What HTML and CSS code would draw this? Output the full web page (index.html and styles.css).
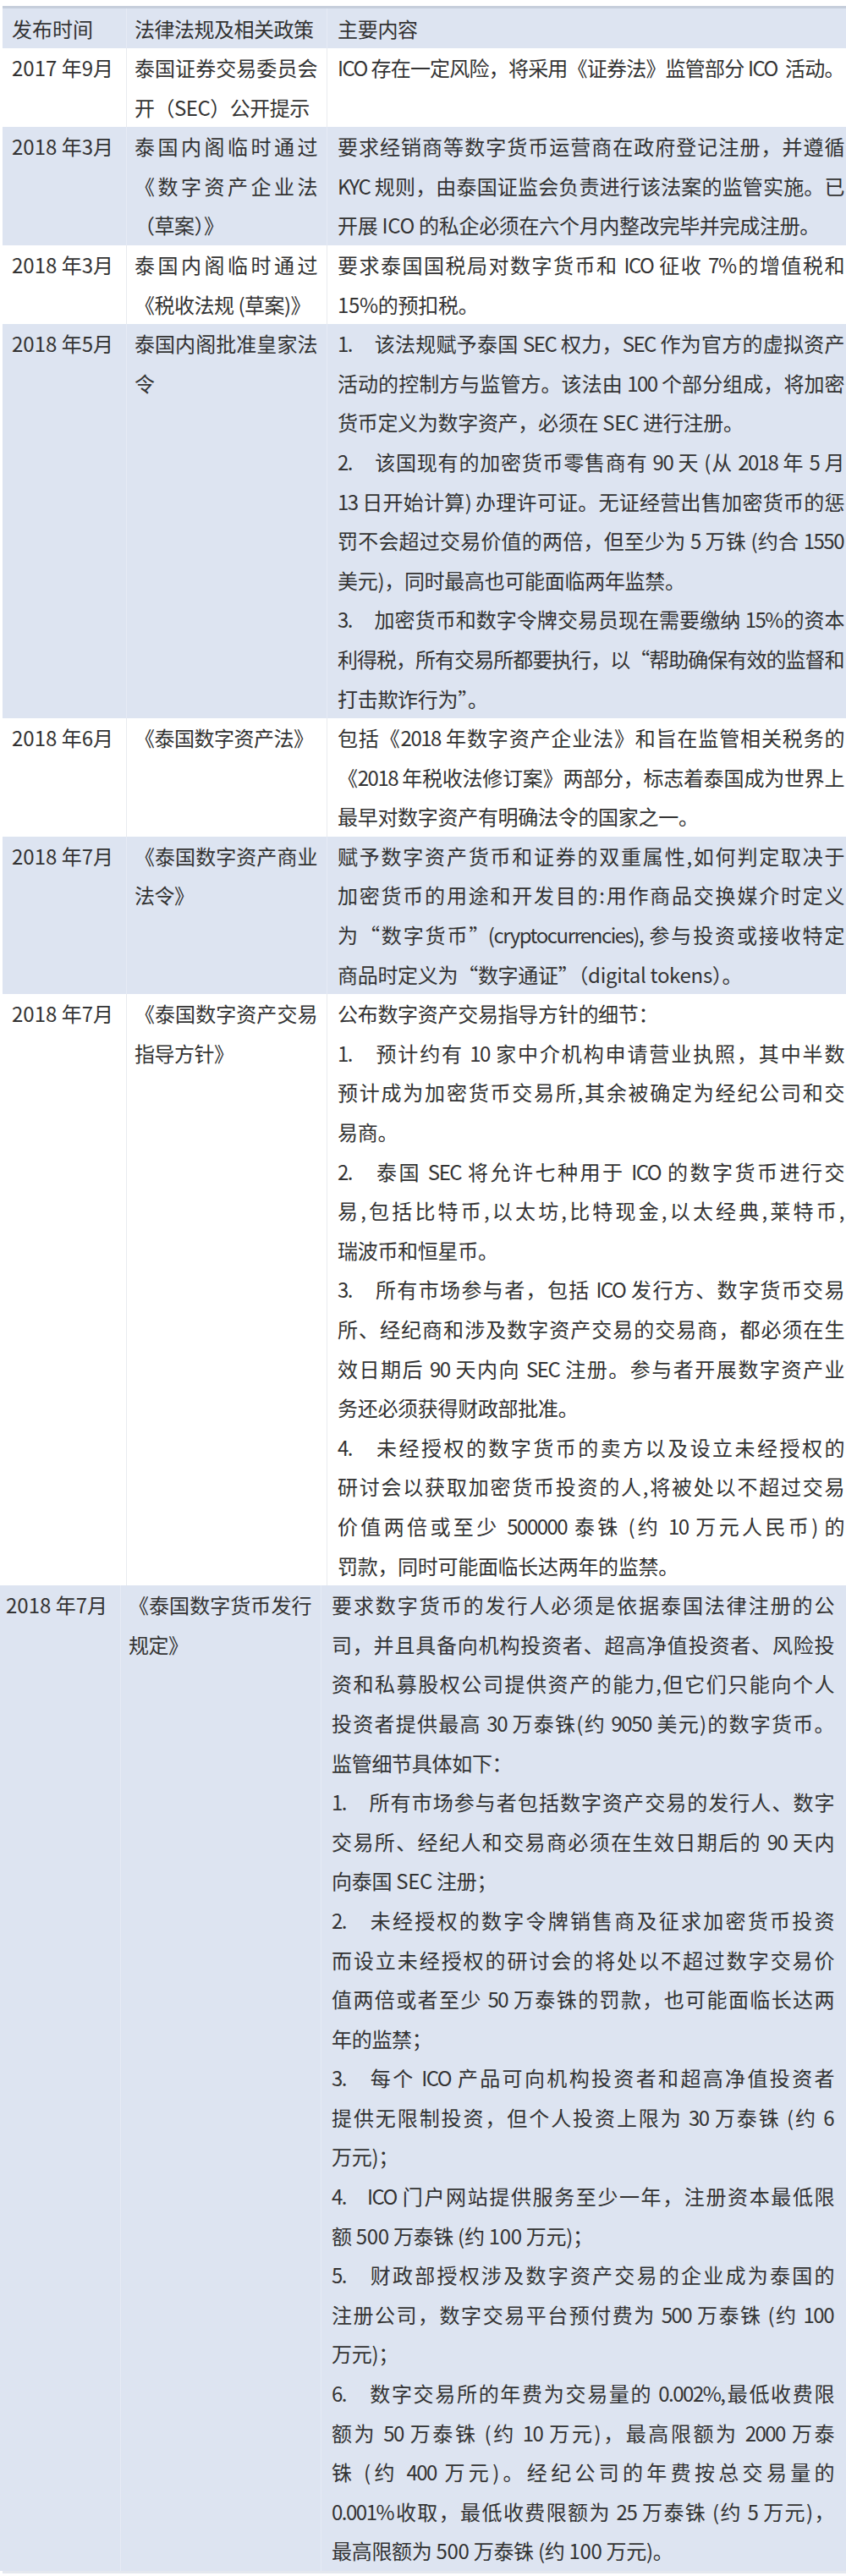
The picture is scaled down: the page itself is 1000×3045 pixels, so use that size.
FILE: index.html
```html
<!DOCTYPE html>
<html lang="zh-CN">
<head>
<meta charset="utf-8">
<title>泰国数字资产法规</title>
<link rel="stylesheet" href="styles.css">
</head>
<body>
<div class="tbl">
  <div class="row row--blue row--head">
    <div class="cell c1"><span class="line end">发布时间</span></div>
    <div class="cell c2"><span class="line end">法律法规及相关政策</span></div>
    <div class="cell c3"><span class="line end">主要内容</span></div>
  </div>

  <div class="row">
    <div class="cell c1"><span class="line end">2017 年9月</span></div>
    <div class="cell c2">
      <span class="line">泰国证券交易委员会</span>
      <span class="line end">开（SEC）公开提示</span>
    </div>
    <div class="cell c3">
      <span class="line">ICO 存在一定风险，将采用《证券法》监管部分 ICO&nbsp; 活动。</span>
    </div>
  </div>

  <div class="row row--blue">
    <div class="cell c1"><span class="line end">2018 年3月</span></div>
    <div class="cell c2">
      <span class="line">泰国内阁临时通过</span>
      <span class="line">《数字资产企业法</span>
      <span class="line end">（草案）》</span>
    </div>
    <div class="cell c3">
      <span class="line">要求经销商等数字货币运营商在政府登记注册，并遵循</span>
      <span class="line">KYC 规则，由泰国证监会负责进行该法案的监管实施。已</span>
      <span class="line end">开展 ICO 的私企必须在六个月内整改完毕并完成注册。</span>
    </div>
  </div>

  <div class="row">
    <div class="cell c1"><span class="line end">2018 年3月</span></div>
    <div class="cell c2">
      <span class="line">泰国内阁临时通过</span>
      <span class="line end">《税收法规 (草案)》</span>
    </div>
    <div class="cell c3">
      <span class="line">要求泰国国税局对数字货币和 ICO 征收 7%的增值税和</span>
      <span class="line end">15%的预扣税。</span>
    </div>
  </div>

  <div class="row row--blue">
    <div class="cell c1"><span class="line end">2018 年5月</span></div>
    <div class="cell c2">
      <span class="line">泰国内阁批准皇家法</span>
      <span class="line end">令</span>
    </div>
    <div class="cell c3">
      <span class="line"><span class="num">1.</span>该法规赋予泰国 SEC 权力，SEC 作为官方的虚拟资产</span>
      <span class="line">活动的控制方与监管方。该法由 100 个部分组成，将加密</span>
      <span class="line end">货币定义为数字资产，必须在 SEC 进行注册。</span>
      <span class="line"><span class="num">2.</span>该国现有的加密货币零售商有 90 天 (从 2018 年 5 月</span>
      <span class="line">13 日开始计算) 办理许可证。无证经营出售加密货币的惩</span>
      <span class="line">罚不会超过交易价值的两倍，但至少为 5 万铢 (约合 1550</span>
      <span class="line end">美元)，同时最高也可能面临两年监禁。</span>
      <span class="line"><span class="num">3.</span>加密货币和数字令牌交易员现在需要缴纳 15%的资本</span>
      <span class="line">利得税，所有交易所都要执行，以“帮助确保有效的监督和</span>
      <span class="line end">打击欺诈行为”。</span>
    </div>
  </div>

  <div class="row">
    <div class="cell c1"><span class="line end">2018 年6月</span></div>
    <div class="cell c2">
      <span class="line end">《泰国数字资产法》</span>
    </div>
    <div class="cell c3">
      <span class="line">包括《2018 年数字资产企业法》和旨在监管相关税务的</span>
      <span class="line">《2018 年税收法修订案》两部分，标志着泰国成为世界上</span>
      <span class="line end">最早对数字资产有明确法令的国家之一。</span>
    </div>
  </div>

  <div class="row row--blue">
    <div class="cell c1"><span class="line end">2018 年7月</span></div>
    <div class="cell c2">
      <span class="line">《泰国数字资产商业</span>
      <span class="line end">法令》</span>
    </div>
    <div class="cell c3">
      <span class="line">赋予数字资产货币和证券的双重属性,如何判定取决于</span>
      <span class="line">加密货币的用途和开发目的:用作商品交换媒介时定义</span>
      <span class="line">为“数字货币”(cryptocurrencies), 参与投资或接收特定</span>
      <span class="line end">商品时定义为“数字通证”（digital tokens）。</span>
    </div>
  </div>

  <div class="row">
    <div class="cell c1"><span class="line end">2018 年7月</span></div>
    <div class="cell c2">
      <span class="line">《泰国数字资产交易</span>
      <span class="line end">指导方针》</span>
    </div>
    <div class="cell c3">
      <span class="line end">公布数字资产交易指导方针的细节：</span>
      <span class="line"><span class="num">1.</span>预计约有 10 家中介机构申请营业执照，其中半数</span>
      <span class="line">预计成为加密货币交易所,其余被确定为经纪公司和交</span>
      <span class="line end">易商。</span>
      <span class="line"><span class="num">2.</span>泰国 SEC 将允许七种用于 ICO 的数字货币进行交</span>
      <span class="line">易,包括比特币,以太坊,比特现金,以太经典,莱特币,</span>
      <span class="line end">瑞波币和恒星币。</span>
      <span class="line"><span class="num">3.</span>所有市场参与者，包括 ICO 发行方、数字货币交易</span>
      <span class="line">所、经纪商和涉及数字资产交易的交易商，都必须在生</span>
      <span class="line">效日期后 90 天内向 SEC 注册。参与者开展数字资产业</span>
      <span class="line end">务还必须获得财政部批准。</span>
      <span class="line"><span class="num">4.</span>未经授权的数字货币的卖方以及设立未经授权的</span>
      <span class="line">研讨会以获取加密货币投资的人,将被处以不超过交易</span>
      <span class="line">价值两倍或至少 500000 泰铢 (约 10 万元人民币) 的</span>
      <span class="line end">罚款，同时可能面临长达两年的监禁。</span>
    </div>
  </div>

  <div class="row row--blue row--shift">
    <div class="cell c1"><span class="line end">2018 年7月</span></div>
    <div class="cell c2">
      <span class="line">《泰国数字货币发行</span>
      <span class="line end">规定》</span>
    </div>
    <div class="cell c3">
      <span class="line">要求数字货币的发行人必须是依据泰国法律注册的公</span>
      <span class="line">司，并且具备向机构投资者、超高净值投资者、风险投</span>
      <span class="line">资和私募股权公司提供资产的能力,但它们只能向个人</span>
      <span class="line">投资者提供最高 30 万泰铢(约 9050 美元)的数字货币。</span>
      <span class="line end">监管细节具体如下：</span>
      <span class="line"><span class="num">1.</span>所有市场参与者包括数字资产交易的发行人、数字</span>
      <span class="line">交易所、经纪人和交易商必须在生效日期后的 90 天内</span>
      <span class="line end">向泰国 SEC 注册；</span>
      <span class="line"><span class="num">2.</span>未经授权的数字令牌销售商及征求加密货币投资</span>
      <span class="line">而设立未经授权的研讨会的将处以不超过数字交易价</span>
      <span class="line">值两倍或者至少 50 万泰铢的罚款，也可能面临长达两</span>
      <span class="line end">年的监禁；</span>
      <span class="line"><span class="num">3.</span>每个 ICO 产品可向机构投资者和超高净值投资者</span>
      <span class="line">提供无限制投资，但个人投资上限为 30 万泰铢 (约 6</span>
      <span class="line end">万元)；</span>
      <span class="line"><span class="num">4.</span>ICO 门户网站提供服务至少一年，注册资本最低限</span>
      <span class="line end">额 500 万泰铢 (约 100 万元)；</span>
      <span class="line"><span class="num">5.</span>财政部授权涉及数字资产交易的企业成为泰国的</span>
      <span class="line">注册公司，数字交易平台预付费为 500 万泰铢 (约 100</span>
      <span class="line end">万元)；</span>
      <span class="line"><span class="num">6.</span>数字交易所的年费为交易量的 0.002%,最低收费限</span>
      <span class="line">额为 50 万泰铢 (约 10 万元)，最高限额为 2000 万泰</span>
      <span class="line">铢 (约 400 万元)。经纪公司的年费按总交易量的</span>
      <span class="line">0.001%收取，最低收费限额为 25 万泰铢 (约 5 万元)，</span>
      <span class="line end">最高限额为 500 万泰铢 (约 100 万元)。</span>
    </div>
  </div>
</div>
</body>
</html>
```

FILE: styles.css
```css
html, body {
  margin: 0;
  padding: 0;
  background: #ffffff;
}

body {
  width: 1000px;
  overflow: hidden;
  font-family: "Noto Sans CJK SC", "Noto Sans", sans-serif;
  font-size: 24px;
  color: #333333;
}

.tbl {
  margin: 7px 0 0 3px;
  border-top: 3px solid #c6cedb;
  border-bottom: 3px solid #e4e8ef;
}

.row {
  display: grid;
  grid-template-columns: 146px 237px 1fr;
  background: #ffffff;
}

.row--blue {
  background: #dde4f1;
}

.row--shift {
  margin-left: -7px;
}

.cell {
  line-height: 46.6px;
  min-width: 0;
}

.row--head .cell {
  line-height: 47px;
}

.c1 {
  padding: 0 0 0 11px;
}

.c2 {
  padding: 0 11px 0 9px;
  border-left: 1px solid #e9ebef;
}

.c3 {
  padding: 0 3px 0 12px;
  border-left: 1px solid #e9ebef;
}

.row--blue .c2,
.row--blue .c3 {
  border-left-color: #e6ebf5;
}

.row--shift .c3 {
  padding-right: 15px;
}

.line {
  display: block;
  white-space: nowrap;
  text-align: justify;
  text-align-last: justify;
}

.c2 .line {
  letter-spacing: -0.5px;
}

.c3 .line {
  letter-spacing: -1.5px;
}

.c3 .line.end {
  letter-spacing: -0.3px;
}

.line.end {
  text-align: left;
  text-align-last: left;
}

.num {
  display: inline-block;
  width: 42px;
  text-align: left;
}
```
